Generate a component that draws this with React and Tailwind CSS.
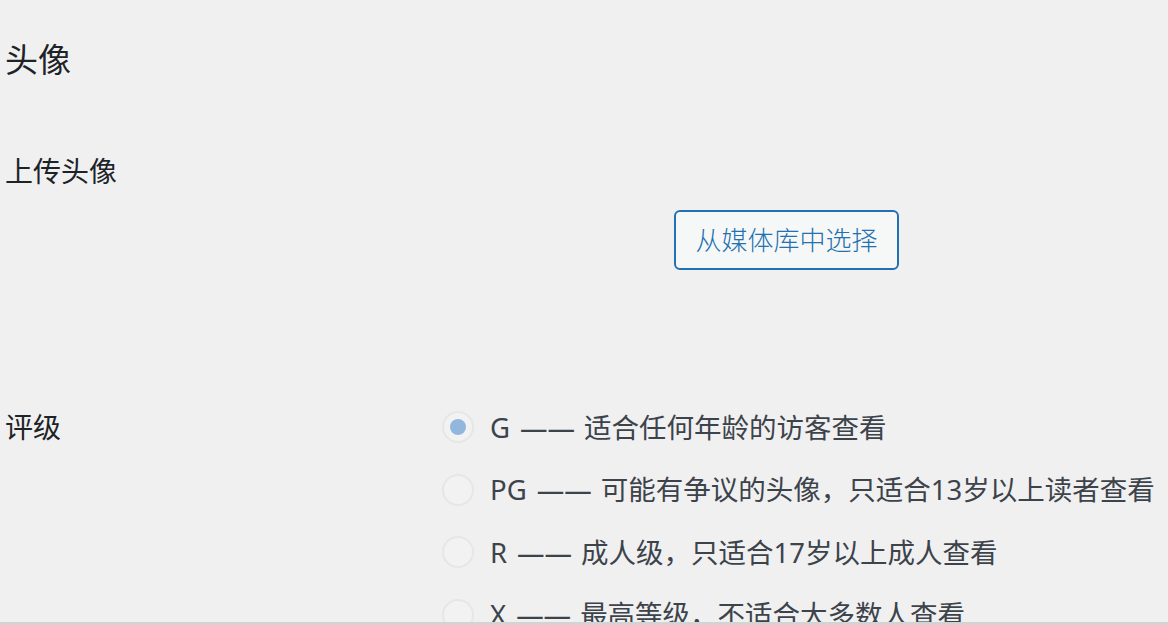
const font = { fontFamily: '"Noto Sans", "Noto Sans CJK SC", sans-serif' };

const ratings = [
  { id: "G", before: "G", after: "适合任何年龄的访客查看", checked: true },
  { id: "PG", before: "PG", after: "可能有争议的头像，只适合13岁以上读者查看" },
  { id: "R", before: "R", after: "成人级，只适合17岁以上成人查看" },
  { id: "X", before: "X", after: "最高等级，不适合大多数人查看" },
];

const Radio = ({ checked }) => (
  <span className="flex items-center justify-center w-[32px] h-[32px] rounded-full border-2 border-[#e6e6e6] bg-[#f2f2f2] shrink-0">
    {checked && <span className="w-[16px] h-[16px] rounded-full bg-[#92b7dd]" />}
  </span>
);

export default function App() {
  return (
    <div
      className="h-[625px] w-full flex flex-col overflow-hidden bg-[#f0f0f1]"
      style={font}
    >
      <div className="flex-1 overflow-hidden pl-[5px]">
        {/* Heading */}
        <h2 className="pt-[43px] text-[33px] leading-[33px] text-[#1d2327] font-normal">
          头像
        </h2>

        {/* Upload avatar */}
        <div className="flex mt-[81px]">
          <div className="w-[437px] shrink-0 text-[28px] leading-[28px] font-normal text-[#1d2327]">
            上传头像
          </div>
          <div className="pt-[53px] pl-[232px]">
            <button className="h-[60px] w-[225px] rounded-[6px] border-2 border-[#2271b1] bg-[#f6f7f7] text-[26px] text-[#2271b1] leading-none font-light">
              从媒体库中选择
            </button>
          </div>
        </div>

        {/* Rating */}
        <div className="flex mt-[126px]">
          <div className="w-[437px] shrink-0 h-[62px] flex items-center text-[28px] font-normal text-[#1d2327]">
            评级
          </div>
          <ul className="flex flex-col">
            {ratings.map((r) => (
              <li key={r.id} className="h-[62.5px] flex items-center gap-[16px]">
                <Radio checked={r.checked} />
                <span className="text-[27.5px] leading-none text-[#3c434a] whitespace-nowrap">
                  {r.before}
                  <span className="inline-block ml-[10px] mr-[9px]">——</span>
                  {r.after}
                </span>
              </li>
            ))}
          </ul>
        </div>
      </div>
      <div className="h-[3px] bg-[#d3d3d3] shrink-0" />
    </div>
  );
}
